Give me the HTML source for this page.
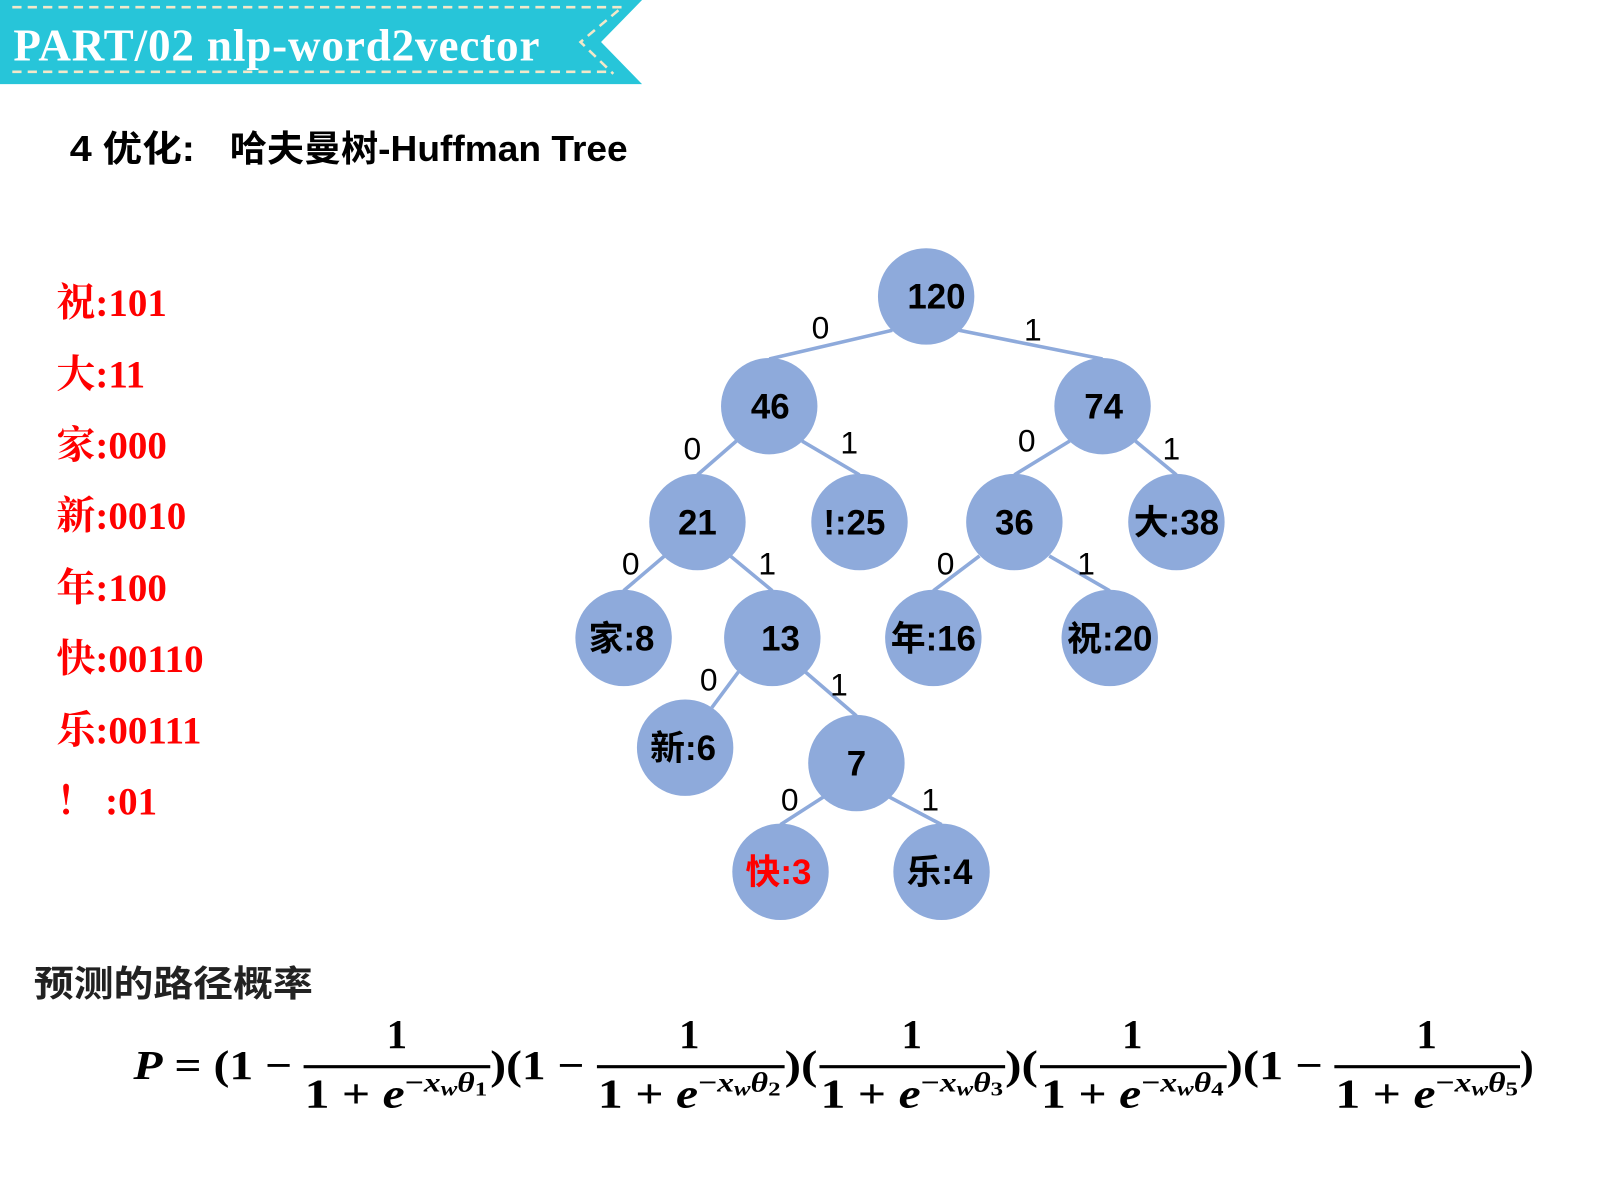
<!DOCTYPE html>
<html><head><meta charset="utf-8"><style>
html,body{margin:0;padding:0;background:#fff;}
svg{display:block;}
.n{font-family:"Liberation Sans Narrow","Liberation Sans","Noto Sans CJK SC",sans-serif;font-weight:bold;font-size:34px;fill:#000;text-anchor:middle;}
.e{font-family:"Liberation Sans","Noto Sans CJK SC",sans-serif;font-size:31px;fill:#000;text-anchor:middle;}
.r{font-family:"Liberation Serif","Noto Serif CJK SC",serif;font-weight:bold;font-size:38px;fill:#f00;}
.f{font-family:"Liberation Serif",serif;font-weight:bold;font-size:40px;fill:#000;}
.fi{font-style:italic;}
.s{font-size:27px;}
.ss{font-size:20px;}
</style></head><body>
<svg width="1600" height="1200" viewBox="0 0 1560 1170" preserveAspectRatio="none" xmlns="http://www.w3.org/2000/svg">
<polygon points="0,0 626,0 586,41 626,82 0,82" fill="#27c5d9"/>
<line x1="12" y1="7" x2="610" y2="7" stroke="#f3e8c9" stroke-width="2.5" stroke-dasharray="9,6"/>
<line x1="12" y1="70" x2="595" y2="70" stroke="#f3e8c9" stroke-width="2.5" stroke-dasharray="9,6"/>
<polyline points="603,10 566,41 598,72" fill="none" stroke="#f3e8c9" stroke-width="2.5" stroke-dasharray="9,6"/>
<text x="13" y="59" font-family="Liberation Serif,serif" font-weight="bold" font-size="44" fill="#fff" textLength="513">PART/02 nlp-word2vector</text>
<g font-family="Liberation Sans,'Noto Sans CJK SC',sans-serif" font-weight="bold" font-size="35" fill="#000">
<text x="68" y="157" textLength="122" lengthAdjust="spacingAndGlyphs">4 优化:</text>
<text x="224" y="157" textLength="388" lengthAdjust="spacingAndGlyphs">哈夫曼树-Huffman Tree</text>
</g>
<text class="r" x="55" y="308">祝:101</text>
<text class="r" x="55" y="378">大:11</text>
<text class="r" x="55" y="447">家:000</text>
<text class="r" x="55" y="516">新:0010</text>
<text class="r" x="55" y="586">年:100</text>
<text class="r" x="55" y="655">快:00110</text>
<text class="r" x="55" y="725">乐:00111</text>
<text class="r" x="55" y="794">！ :01</text>
<g stroke="#8eaadb" stroke-width="3.5">
<line x1="870" y1="322" x2="750" y2="350"/><line x1="935" y1="322" x2="1075" y2="350"/>
<line x1="718" y1="430" x2="680" y2="463"/><line x1="782" y1="430" x2="838" y2="463"/>
<line x1="1043" y1="430" x2="989" y2="463"/><line x1="1107" y1="430" x2="1147" y2="463"/>
<line x1="648" y1="542" x2="608" y2="576"/><line x1="712" y1="542" x2="753" y2="576"/>
<line x1="955" y1="542" x2="910" y2="576"/><line x1="1023" y1="542" x2="1082" y2="576"/>
<line x1="720" y1="655" x2="694" y2="690"/><line x1="785" y1="655" x2="835" y2="698"/>
<line x1="803" y1="777" x2="761" y2="804"/><line x1="867" y1="777" x2="918" y2="804"/>
</g>
<g fill="#8eaadb">
<circle cx="903" cy="289" r="47"/><circle cx="750" cy="396" r="47"/><circle cx="1075" cy="396" r="47"/>
<circle cx="680" cy="509" r="47"/><circle cx="838" cy="509" r="47"/><circle cx="989" cy="509" r="47"/><circle cx="1147" cy="509" r="47"/>
<circle cx="608" cy="622" r="47"/><circle cx="753" cy="622" r="47"/><circle cx="910" cy="622" r="47"/><circle cx="1082" cy="622" r="47"/>
<circle cx="668" cy="729" r="47"/><circle cx="835" cy="744" r="47"/>
<circle cx="761" cy="850" r="47"/><circle cx="918" cy="850" r="47"/>
</g>
<text class="n" x="913" y="301">120</text>
<text class="n" x="751" y="408">46</text><text class="n" x="1076" y="408">74</text>
<text class="n" x="680" y="521">21</text><text class="n" x="833" y="521">!:25</text><text class="n" x="989" y="521">36</text><text class="n" x="1147" y="521">大:38</text>
<text class="n" x="606" y="634">家:8</text><text class="n" x="761" y="634">13</text><text class="n" x="910" y="634">年:16</text><text class="n" x="1082" y="634">祝:20</text>
<text class="n" x="666" y="741">新:6</text><text class="n" x="835" y="756">7</text>
<text class="n" x="759" y="862" style="fill:#f00">快:3</text><text class="n" x="916" y="862">乐:4</text>
<text class="e" x="800" y="330">0</text><text class="e" x="1007" y="332">1</text>
<text class="e" x="675" y="448">0</text><text class="e" x="828" y="442">1</text>
<text class="e" x="1001" y="440">0</text><text class="e" x="1142" y="448">1</text>
<text class="e" x="615" y="560">0</text><text class="e" x="748" y="560">1</text>
<text class="e" x="922" y="560">0</text><text class="e" x="1059" y="560">1</text>
<text class="e" x="691" y="673">0</text><text class="e" x="818" y="678">1</text>
<text class="e" x="770" y="790">0</text><text class="e" x="907" y="790">1</text>
<text x="33" y="971" font-family="Liberation Sans,'Noto Sans CJK SC',sans-serif" font-weight="bold" font-size="35" fill="#222" textLength="272" lengthAdjust="spacingAndGlyphs">预测的路径概率</text>
<g class="f">
<text x="130" y="1052" textLength="155" lengthAdjust="spacingAndGlyphs"><tspan class="fi">P</tspan> = (1 −</text>
<text x="478" y="1052" textLength="92" lengthAdjust="spacingAndGlyphs">)(1 −</text>
<text x="765" y="1052" textLength="32" lengthAdjust="spacingAndGlyphs">)(</text>
<text x="980" y="1052" textLength="32" lengthAdjust="spacingAndGlyphs">)(</text>
<text x="1196" y="1052" textLength="94" lengthAdjust="spacingAndGlyphs">)(1 −</text>
<text x="1482" y="1052">)</text>
</g>
<g stroke="#000" stroke-width="3">
<line x1="296" y1="1040" x2="478" y2="1040"/>
<line x1="582" y1="1040" x2="765" y2="1040"/>
<line x1="799" y1="1040" x2="980" y2="1040"/>
<line x1="1014" y1="1040" x2="1196" y2="1040"/>
<line x1="1301" y1="1040" x2="1482" y2="1040"/>
</g>
<g class="f" text-anchor="middle">
<text x="387" y="1022">1</text><text x="672" y="1022">1</text><text x="889" y="1022">1</text><text x="1104" y="1022">1</text><text x="1391" y="1022">1</text>
</g>
<g class="f">
<text x="297" y="1080" textLength="178" lengthAdjust="spacingAndGlyphs">1 + <tspan class="fi">e</tspan><tspan class="s" dy="-16">−<tspan class="fi">x</tspan></tspan><tspan class="ss fi" dy="4">w</tspan><tspan class="s fi" dy="-4">θ</tspan><tspan class="ss" dy="4">1</tspan></text>
<text x="583" y="1080" textLength="178" lengthAdjust="spacingAndGlyphs">1 + <tspan class="fi">e</tspan><tspan class="s" dy="-16">−<tspan class="fi">x</tspan></tspan><tspan class="ss fi" dy="4">w</tspan><tspan class="s fi" dy="-4">θ</tspan><tspan class="ss" dy="4">2</tspan></text>
<text x="800" y="1080" textLength="178" lengthAdjust="spacingAndGlyphs">1 + <tspan class="fi">e</tspan><tspan class="s" dy="-16">−<tspan class="fi">x</tspan></tspan><tspan class="ss fi" dy="4">w</tspan><tspan class="s fi" dy="-4">θ</tspan><tspan class="ss" dy="4">3</tspan></text>
<text x="1015" y="1080" textLength="178" lengthAdjust="spacingAndGlyphs">1 + <tspan class="fi">e</tspan><tspan class="s" dy="-16">−<tspan class="fi">x</tspan></tspan><tspan class="ss fi" dy="4">w</tspan><tspan class="s fi" dy="-4">θ</tspan><tspan class="ss" dy="4">4</tspan></text>
<text x="1302" y="1080" textLength="178" lengthAdjust="spacingAndGlyphs">1 + <tspan class="fi">e</tspan><tspan class="s" dy="-16">−<tspan class="fi">x</tspan></tspan><tspan class="ss fi" dy="4">w</tspan><tspan class="s fi" dy="-4">θ</tspan><tspan class="ss" dy="4">5</tspan></text>
</g>
</svg>
</body></html>
